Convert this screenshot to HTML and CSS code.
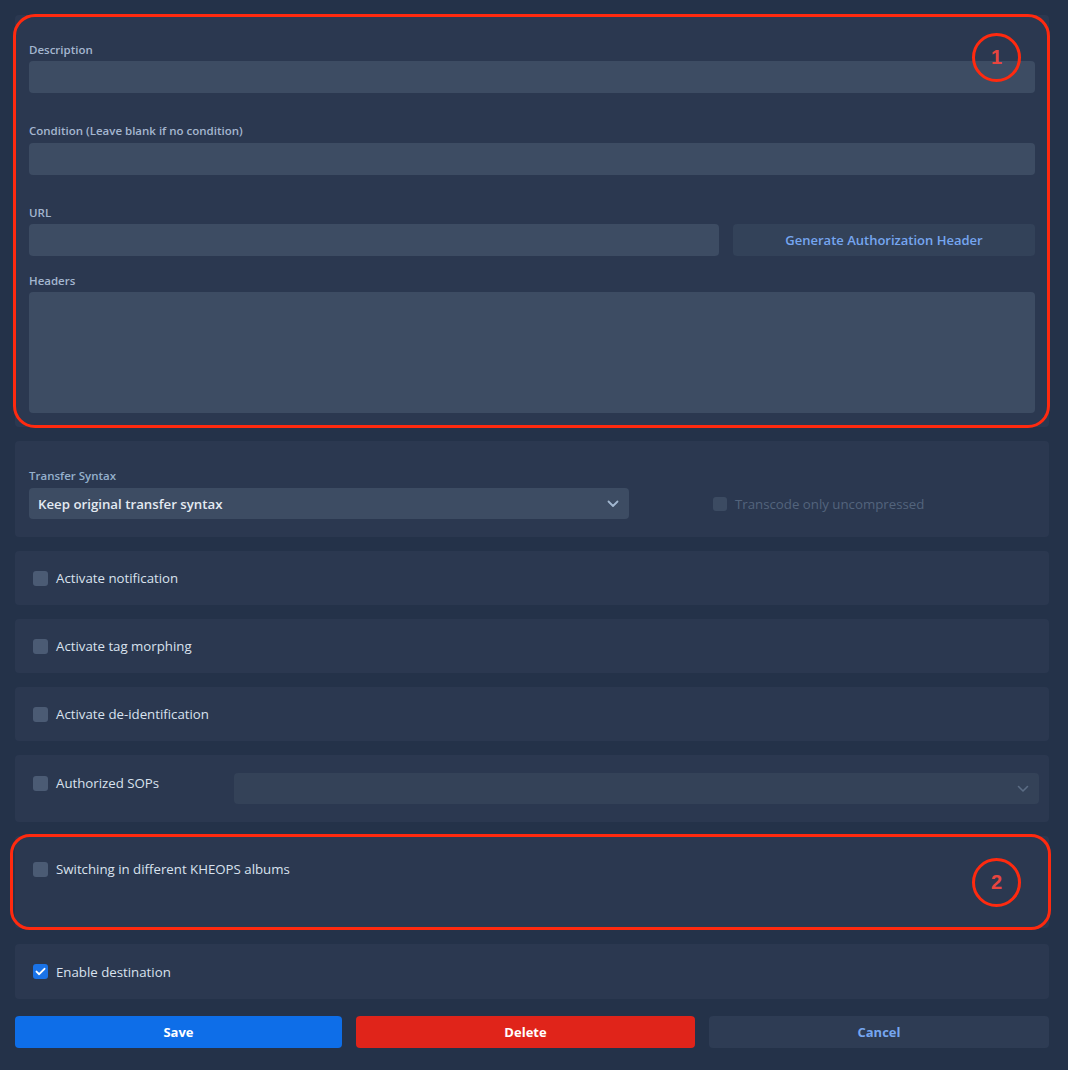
FILE: index.html
```html
<!DOCTYPE html>
<html lang="en">
<head>
<meta charset="utf-8">
<title>Destination</title>
<link rel="stylesheet" href="styles.css">
</head>
<body>
<div class="page">
  <section class="card card-main">
    <div class="field field-desc">
      <label class="label">Description</label>
      <div class="input"></div>
    </div>
    <div class="field field-cond">
      <label class="label">Condition (Leave blank if no condition)</label>
      <div class="input"></div>
    </div>
    <div class="field field-url">
      <label class="label">URL</label>
      <div class="url-row">
        <div class="input"></div>
        <button class="btn-gen">Generate Authorization Header</button>
      </div>
    </div>
    <div class="field field-headers">
      <label class="label">Headers</label>
      <div class="textarea"></div>
    </div>
    <div class="annot annot-1"><span class="num">1</span></div>
  </section>

  <section class="card card-syntax">
    <div class="syntax-col">
      <label class="label label-syntax">Transfer Syntax</label>
      <div class="select">
        <span>Keep original transfer syntax</span>
        <svg class="chev" width="12" height="8" viewBox="0 0 12 8"><path d="M1.5 1.5 L6 6 L10.5 1.5" fill="none" stroke="currentColor" stroke-width="1.8" stroke-linecap="round" stroke-linejoin="round"/></svg>
      </div>
    </div>
    <div class="check disabled">
      <span class="box"></span>
      <span>Transcode only uncompressed</span>
    </div>
  </section>

  <section class="card card-row">
    <div class="check"><span class="box"></span><span>Activate notification</span></div>
  </section>
  <section class="card card-row">
    <div class="check"><span class="box"></span><span>Activate tag morphing</span></div>
  </section>
  <section class="card card-row">
    <div class="check"><span class="box"></span><span>Activate de-identification</span></div>
  </section>

  <section class="card card-sops">
    <div class="check sops-check"><span class="box"></span><span>Authorized SOPs</span></div>
    <div class="select select-dim">
      <span></span>
      <svg class="chev" width="12" height="8" viewBox="0 0 12 8"><path d="M1.5 1.5 L6 6 L10.5 1.5" fill="none" stroke="currentColor" stroke-width="1.6" stroke-linecap="round" stroke-linejoin="round"/></svg>
    </div>
  </section>

  <section class="card card-kheops">
    <div class="check"><span class="box"></span><span>Switching in different KHEOPS albums</span></div>
    <div class="annot annot-2"><span class="num">2</span></div>
  </section>

  <section class="card card-row card-enable">
    <div class="check">
      <span class="box checked">
        <svg width="11" height="9" viewBox="0 0 11 9"><path d="M1.5 4.6 L4.2 7.2 L9.5 1.8" fill="none" stroke="#fff" stroke-width="1.9" stroke-linecap="round" stroke-linejoin="round"/></svg>
      </span>
      <span>Enable destination</span>
    </div>
  </section>

  <div class="actions">
    <button class="btn btn-save">Save</button>
    <button class="btn btn-delete">Delete</button>
    <button class="btn btn-cancel">Cancel</button>
  </div>
</div>
</body>
</html>
```

FILE: styles.css
```css
* { box-sizing: border-box; }
html, body { margin: 0; padding: 0; }
body {
  background: #243249;
  font-family: "Open Sans", "Noto Sans", sans-serif;
  font-size: 13.25px;
  color: #d9e2ee;
  width: 1068px;
  height: 1070px;
  overflow: hidden;
}
.page {
  padding: 15px 19px 0 15px;
  display: flex;
  flex-direction: column;
}
.card {
  background: #2b3850;
  border-radius: 4px;
  position: relative;
}
.card-main {
  padding: 27px 14px 14px 14px;
  height: 412px;
}
.field { display: flex; flex-direction: column; }
.field-cond { margin-top: 30px; }
.field-cond .label { margin-bottom: 4px; }
.field-url { margin-top: 30px; }
.field-headers { margin-top: 17px; }
.label {
  display: block;
  font-size: 11.5px;
  font-weight: 600;
  line-height: 16px;
  height: 16px;
  color: #a4b6cf;
  margin-bottom: 3px;
}
.input {
  height: 32px;
  background: #3d4c63;
  border-radius: 4px;
}
.textarea {
  height: 121px;
  background: #3d4c63;
  border-radius: 4px;
}
.url-row {
  display: flex;
  gap: 14px;
}
.url-row .input { flex: 0 0 690px; }
.btn-gen {
  flex: 1;
  height: 32px;
  border: none;
  border-radius: 4px;
  background: #334259;
  color: #76a6f0;
  font-family: inherit;
  font-size: 13px;
  font-weight: 600;
  padding: 0;
}
.annot {
  position: absolute;
  border: 3px solid #ff2a0f;
  pointer-events: none;
}
.annot-1 {
  left: -2px; top: -1px; right: -1px; bottom: -1px;
  border-radius: 22px;
}
.annot-2 {
  left: -5px; top: -2px; right: -2px; bottom: -2px;
  border-radius: 20px;
}
.num {
  position: absolute;
  width: 49px; height: 49px;
  border: 3px solid #ff2a0f;
  border-radius: 50%;
  color: #e8453f;
  font-family: "Liberation Sans", Arial, sans-serif;
  font-weight: 700;
  font-size: 20px;
  display: flex;
  align-items: center;
  justify-content: center;
}
.annot-1 .num { left: 956px; top: 16px; }
.annot-2 .num { left: 959px; top: 21px; }

.card-syntax {
  margin-top: 14px;
  height: 96px;
  padding: 27px 14px 0 14px;
  display: flex;
  align-items: flex-start;
}
.syntax-col { width: 600px; }
.label-syntax { color: #95b0cc; font-weight: 600; margin-bottom: 4px; }
.select {
  height: 31px;
  background: #3d4c63;
  border-radius: 4px;
  display: flex;
  align-items: center;
  justify-content: space-between;
  padding: 0 10px 0 9px;
  font-weight: 600;
  font-size: 13.25px;
  color: #e4eaf2;
}
.chev { color: #a2b7d0; display: block; }
.card-syntax .check {
  margin-left: 84px;
  margin-top: 28px;
}
.check {
  display: flex;
  align-items: center;
  gap: 8px;
  line-height: 16px;
}
.box {
  width: 15px; height: 15px;
  border-radius: 3px;
  background: #4b5b74;
  display: flex;
  align-items: center;
  justify-content: center;
  flex: none;
}
.box.checked { background: #1a73e8; }
.check.disabled { color: #53647d; gap: 8px; }
.check.disabled .box { background: #3c4b62; width: 14px; height: 14px; }

.card-row {
  margin-top: 14px;
  height: 54px;
  padding: 0 18px;
  display: flex;
  align-items: center;
}
.card-sops {
  margin-top: 14px;
  height: 67px;
  padding: 18px 10px 0 18px;
  display: flex;
  align-items: flex-start;
}
.sops-check { width: 201px; margin-top: 2px; }
.select-dim {
  flex: 1;
  background: #344258;
}
.select-dim .chev { color: #5b6c84; }
.card-kheops {
  margin-top: 14px;
  height: 92px;
  padding: 25px 18px 0 18px;
}
.card-enable { margin-top: 16px; height: 55px; }
.actions {
  margin-top: 17px;
  display: grid;
  grid-template-columns: 327fr 339fr 340fr;
  gap: 14px;
}
.btn {
  height: 32px;
  border: none;
  border-radius: 4px;
  font-family: inherit;
  font-size: 13px;
  font-weight: 700;
  color: #fff;
}
.btn-save { background: #0e6ee8; }
.btn-delete { background: #e0241a; }
.btn-cancel { background: #2e3c54; color: #76a6f0; }
```
